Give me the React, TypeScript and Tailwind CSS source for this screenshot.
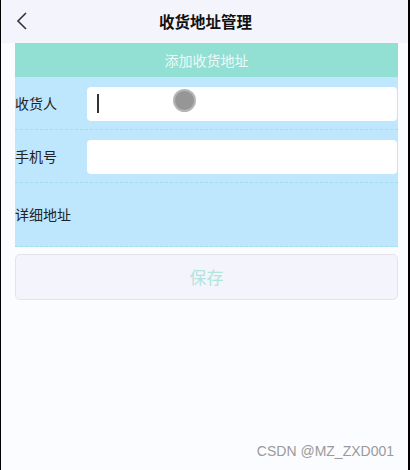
import React from 'react'

export default function App() {
  const font = { fontFamily: '"Noto Sans CJK SC", "Liberation Sans", sans-serif' }

  return (
    <div
      className="w-[410px] h-[470px] bg-[#fbfcff] border-l border-r-2 border-black flex flex-col relative"
      style={font}
    >
      {/* Header */}
      <div className="h-[43px] bg-[#f4f5fc] flex items-center relative">
        <svg className="absolute left-[14px] top-[12px]" width="14" height="18" viewBox="0 0 14 18">
          <path d="M11 1 L3 9 L11 17" fill="none" stroke="#333" strokeWidth="1.6" />
        </svg>
        <div className="flex-1 text-center text-[15.5px] font-bold text-[#111] leading-none pt-[1px] pl-[2px]">
          收货地址管理
        </div>
      </div>

      {/* Form card */}
      <div className="mx-[14px] w-[383px]">
        <div className="h-[34px] bg-[#92dfd4] flex items-center justify-center text-[14px] text-[#eefaf8]">
          添加收货地址
        </div>
        <div className="bg-[#bee6fd]">
          <div className="h-[53px] flex items-center border-b border-dashed border-[#9fe0e6]">
            <span className="w-[72px] text-[14px] text-[#222]">收货人</span>
            <div className="flex-1 h-[34px] mt-[1px] bg-white rounded-[4px] mr-[1px] relative flex items-center pl-[10px]">
              <span className="w-[1.5px] h-[19px] bg-[#333]" />
              <span className="absolute left-[86px] top-[2px] w-[23px] h-[23px] rounded-full bg-[#969696] border-2 border-[#b5b5b5]" />
            </div>
          </div>
          <div className="h-[53px] flex items-center border-b border-dashed border-[#9fe0e6]">
            <span className="w-[72px] text-[14px] text-[#222]">手机号</span>
            <div className="flex-1 h-[34px] mt-[1px] bg-white rounded-[4px] mr-[1px]" />
          </div>
          <div className="h-[64px] flex items-center border-b border-dashed border-[#9fe0e6]">
            <span className="text-[14px] text-[#222]">详细地址</span>
          </div>
        </div>

        {/* Save */}
        <button className="mt-[7px] w-full h-[46px] rounded-[5px] bg-[#f4f4fd] border border-[#e3e3ec] text-[17px] text-[#b1e4dc]">
          保存
        </button>
      </div>

      <div
        className="absolute right-[14px] bottom-[8px] text-[14px] text-[#9a9a9a]"
        style={{ fontFamily: '"Liberation Sans", Arial, sans-serif' }}
      >
        CSDN @MZ_ZXD001
      </div>
    </div>
  )
}
